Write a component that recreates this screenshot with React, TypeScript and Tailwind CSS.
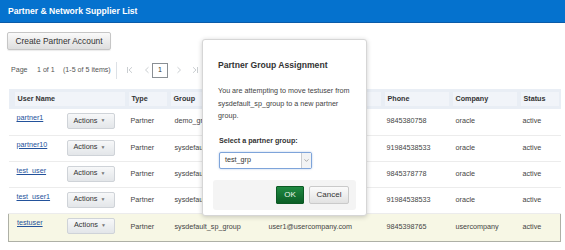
import { ChevronDown } from "lucide-react"

const rows = [
    { user: "partner1", group: "demo_grp", email: "", phone: "9845380758", company: "oracle" },
    { user: "partner10", group: "sysdefault_sp_group", email: "", phone: "91984538533", company: "oracle" },
    { user: "test_user", group: "sysdefault_sp_group", email: "", phone: "9845378778", company: "oracle" },
    { user: "test_user1", group: "sysdefault_sp_group", email: "", phone: "91984538533", company: "oracle" },
    { user: "testuser", group: "sysdefault_sp_group", email: "user1@usercompany.com", phone: "9845398765", company: "usercompany", selected: true },
]

// the Email header sits under the dialog, so it carries no visible label
const cols = [
    { label: "User Name", w: "w-[118px]" },
    { label: "Type", w: "w-[42px]" },
    { label: "Group", w: "w-[95px]" },
    { label: "", w: "w-[119px]" },
    { label: "Phone", w: "w-[68px]" },
    { label: "Company", w: "w-[68px]" },
    { label: "Status", w: "w-[42px]" },
]

const ActionsButton = () => (
    <div className="flex h-[16px] w-[48px] items-center justify-between rounded-[2px] border border-[#cfd3d8] bg-gradient-to-b from-[#f7f8f9] to-[#e3e6e9] pl-[6px] pr-[8px] text-[7.3px] text-[#333]">
        <span>Actions</span>
        <span className="text-[5px] text-[#777]">▼</span>
    </div>
)

const PagerIcon = ({ d }: { d: string }) => (
    <svg width="8" height="8" viewBox="0 0 8 8" className="shrink-0 text-[#c4c8cc]">
        <path d={d} fill="none" stroke="currentColor" strokeWidth="0.9" />
    </svg>
)

export default function App() {
    return (
        <div
            className="relative h-[250px] w-[565px] overflow-hidden bg-white text-[#444]"
            style={{ fontFamily: '"Liberation Sans", Arial, sans-serif' }}
        >
            {/* HEADER */}
            <div className="flex h-[23px] items-center border-b border-[#0a5ba8] bg-[#0572ce] pl-[8px] text-[8.6px] font-bold text-white">
                Partner &amp; Network Supplier List
            </div>

            <div className="pl-[7px] pt-[9px]">
                <button className="flex h-[18px] w-[104px] items-center justify-center rounded-[2px] border border-[#c6c6c6] bg-gradient-to-b from-[#fafafa] to-[#dedede] text-[8.4px] text-[#333] shadow-[0_1px_1px_rgba(0,0,0,0.08)]">
                    Create Partner Account
                </button>

                {/* PAGER */}
                <div className="mt-[12px] flex h-[16px] items-center pl-[4px] text-[7.1px] text-[#555]">
                    <span className="w-[26px]">Page</span>
                    <span className="w-[26px]">1 of 1</span>
                    <span className="w-[53px] whitespace-nowrap">(1-5 of 5 items)</span>
                    <span className="h-[17px] w-px bg-[#dde1e6]" />
                    <span className="ml-[9px] flex"><PagerIcon d="M1.5 1v6M6 1.2 3 4l3 2.8" /></span>
                    <span className="ml-[9px] flex"><PagerIcon d="M5.5 1.2 2.5 4l3 2.8" /></span>
                    <span className="ml-[1px] flex h-[15px] w-[16px] items-center justify-center border border-[#8a8f94] text-[#333]">1</span>
                    <span className="ml-[7px] flex"><PagerIcon d="M2.5 1.2 5.5 4l-3 2.8" /></span>
                    <span className="ml-[8px] flex"><PagerIcon d="M2 1.2 5 4 2 6.8M6.5 1v6" /></span>
                </div>
            </div>

            {/* TABLE */}
            <table className="ml-[8px] mt-[11px] w-[552px] table-fixed border-collapse text-[7.2px]">
                <thead>
                    <tr className="h-[20px] bg-[#e9eef5]">
                        {cols.map((c, i) => (
                            <th key={i} className={`${c.w} p-0 align-middle`}>
                                <div className={`${i === 0 ? "ml-[6px]" : "ml-[2px]"} mr-[2px] flex h-[14px] items-center bg-[#f1f4f9] pl-[3px] text-left font-bold text-[#333]`}>
                                    {c.label}
                                </div>
                            </th>
                        ))}
                    </tr>
                </thead>
                <tbody>
                    {rows.map((r) => (
                        <tr
                            key={r.user}
                            className={
                                r.selected
                                    ? "h-[28px] border border-[#aeb0a6] bg-[#f7f7e5]"
                                    : "h-[26px] border-b border-[#ececec]"
                            }
                        >
                            <td className="p-0 align-top">
                                <div className="flex items-start pl-[8px]">
                                    <a className="mt-[4px] w-[50px] text-[#23529b] underline underline-offset-1">
                                        {r.user}
                                    </a>
                                    <div className="mt-[4px]">
                                        <ActionsButton />
                                    </div>
                                </div>
                            </td>
                            <td className="p-0 pl-[4px] align-middle">Partner</td>
                            <td className="truncate p-0 pl-[6px] align-middle">{r.group}</td>
                            <td className="truncate p-0 pl-[5px] align-middle">{r.email}</td>
                            <td className="p-0 pl-[4px] align-middle">{r.phone}</td>
                            <td className="p-0 pl-[5px] align-middle">{r.company}</td>
                            <td className="p-0 pl-[4px] align-middle">active</td>
                        </tr>
                    ))}
                </tbody>
            </table>

            {/* DIALOG */}
            <div className="absolute left-[202px] top-[39px] flex h-[177px] w-[165px] flex-col rounded-[3px] border border-[#d6d6d6] bg-white px-[10px] pb-[5px] shadow-[0_1px_5px_rgba(0,0,0,0.2)]">
                <div className="mt-[19px] pl-[5px] text-[8.6px] font-bold text-[#333]">
                    Partner Group Assignment
                </div>
                <p className="mt-[13px] pl-[5px] text-[7.2px] leading-[12.7px] text-[#444]">
                    You are attempting to move testuser from sysdefault_sp_group to a new partner group.
                </p>
                <div className="mt-[13px] pl-[6px] text-[7.2px] font-bold text-[#333]">
                    Select a partner group:
                </div>
                <div className="ml-[6px] mt-[5px] flex h-[17px] w-[93px] items-center rounded-[2px] border border-[#7ea4da] bg-white shadow-[0_0_2px_rgba(90,140,210,0.5)]">
                    <span className="flex-1 pl-[5px] text-[7.2px] text-[#333]">test_grp</span>
                    <span className="flex h-full w-[10px] items-center justify-center border-l border-[#c9ccd0] bg-[#f2f3f4]">
                        <ChevronDown size={7} strokeWidth={2} className="text-[#777]" />
                    </span>
                </div>
                <div className="mt-auto flex h-[30px] items-center justify-end gap-[5px] rounded-[3px] bg-[#f4f4f4] pr-[7px]">
                    <button className="flex h-[18px] w-[28px] items-center justify-center rounded-[1px] border border-[#0c5a25] bg-gradient-to-b from-[#1f8a42] to-[#0b5e26] text-[8px] text-[#eaf6ea]">
                        OK
                    </button>
                    <button className="flex h-[18px] w-[40px] items-center justify-center rounded-[2px] border border-[#cacaca] bg-gradient-to-b from-[#fbfbfb] to-[#e2e2e2] text-[8px] text-[#333]">
                        Cancel
                    </button>
                </div>
            </div>
        </div>
    )
}
